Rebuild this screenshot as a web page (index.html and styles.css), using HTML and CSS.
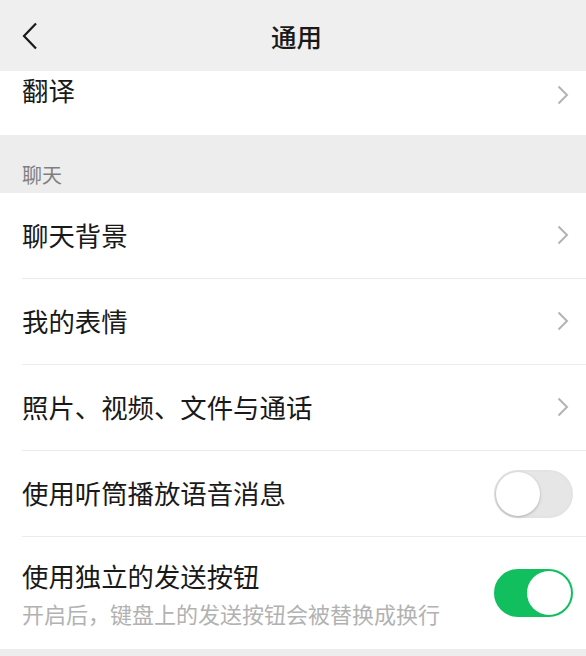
FILE: index.html
```html
<!DOCTYPE html>
<html lang="zh-CN">
  <head>
    <meta charset="UTF-8" />
    <meta name="viewport" content="width=device-width, initial-scale=1.0" />
    <title>通用</title>
    <link rel="stylesheet" href="styles.css">
  </head>
  <body>
    <div class="page">
      <!-- top bar -->
      <header class="topbar">
        <span class="back">
          <svg width="16" height="28" viewBox="0 0 16 28">
            <path d="M14 1.5 L2 14 L14 26.5" fill="none" stroke="#191919" stroke-width="2.2" />
          </svg>
        </span>
        <h1 class="title">通用</h1>
        <span></span>
      </header>

      <!-- translate, scrolled half out of view -->
      <div class="list">
        <div class="row row-cut">
          <span class="row-text">翻译</span>
          <svg class="arrow" width="12" height="20" viewBox="0 0 12 20">
            <path d="M1.5 1.5 L10 10 L1.5 18.5" fill="none" stroke="#b3b3b3" stroke-width="2" />
          </svg>
        </div>
      </div>

      <div class="section-title">聊天</div>

      <div class="list">
        <div class="row">
          <span class="row-text">聊天背景</span>
          <svg class="arrow" width="12" height="20" viewBox="0 0 12 20">
            <path d="M1.5 1.5 L10 10 L1.5 18.5" fill="none" stroke="#b3b3b3" stroke-width="2" />
          </svg>
        </div>
        <div class="row">
          <span class="row-text">我的表情</span>
          <svg class="arrow" width="12" height="20" viewBox="0 0 12 20">
            <path d="M1.5 1.5 L10 10 L1.5 18.5" fill="none" stroke="#b3b3b3" stroke-width="2" />
          </svg>
        </div>
        <div class="row">
          <span class="row-text">照片、视频、文件与通话</span>
          <svg class="arrow" width="12" height="20" viewBox="0 0 12 20">
            <path d="M1.5 1.5 L10 10 L1.5 18.5" fill="none" stroke="#b3b3b3" stroke-width="2" />
          </svg>
        </div>
        <div class="row">
          <span class="row-text">使用听筒播放语音消息</span>
          <span class="switch"><span class="knob"></span></span>
        </div>
        <div class="row row-tall">
          <div class="row-body">
            <span class="row-text">使用独立的发送按钮</span>
            <span class="row-desc">开启后，键盘上的发送按钮会被替换成换行</span>
          </div>
          <span class="switch switch-on"><span class="knob"></span></span>
        </div>
      </div>
    </div>
  </body>
</html>
```

FILE: styles.css
```css
body {
  margin: 0;
  padding: 0;
  background-color: #ededed;
  color: #191919;
  font-family: "Noto Sans CJK SC", "Noto Sans", sans-serif;
}

.page {
  width: 586px;
  height: 656px;
  overflow: hidden;
}

.topbar {
  height: 71px;
  display: grid;
  grid-template-columns: 1fr auto 1fr;
  align-items: center;
  padding: 0 22px;
  box-sizing: border-box;
  background-color: #efefef;
}

.back {
  display: flex;
  align-items: center;
  padding-top: 1px;
}

.title {
  margin: 0 0 0 7px;
  font-size: 25.5px;
  font-weight: 500;
  line-height: 30px;
}

.list {
  background-color: #fff;
  padding-left: 22px;
}

.row {
  height: 83px;
  padding-bottom: 2px;
  display: flex;
  align-items: center;
  justify-content: space-between;
  padding-right: 13px;
  border-top: 1px solid #ececec;
}

.row:first-child {
  border-top: none;
}

.row-cut {
  height: 64px;
  padding: 4px 13px 0 0;
  align-items: flex-start;
  box-sizing: border-box;
}

.row-cut .arrow {
  margin-top: 10px;
}

.row-text {
  font-size: 26.4px;
  line-height: 30px;
}

.arrow {
  margin-right: 4px;
}

.section-title {
  height: 58px;
  display: flex;
  align-items: flex-end;
  padding: 0 0 6px 22px;
  box-sizing: border-box;
  font-size: 20px;
  line-height: 24px;
  color: #7f7f7f;
}

.row-tall {
  height: 110px;
}

.row-body {
  display: flex;
  flex-direction: column;
  gap: 7px;
  padding-top: 4px;
}

.row-desc {
  font-size: 22px;
  line-height: 30px;
  color: #b2b2b2;
}

.switch {
  width: 79px;
  height: 48px;
  margin-top: 2px;
  border-radius: 24px;
  background-color: #e6e6e6;
  box-sizing: border-box;
  border: 2px solid #e3e3e3;
  display: flex;
  align-items: center;
}

.knob {
  width: 44px;
  height: 44px;
  border-radius: 50%;
  background-color: #fff;
  box-shadow: 0 1px 3px rgba(0, 0, 0, 0.25);
}

.switch-on {
  background-color: #12bf5f;
  border-color: #12bf5f;
  justify-content: flex-end;
}

.switch-on .knob {
  box-shadow: none;
}
```
